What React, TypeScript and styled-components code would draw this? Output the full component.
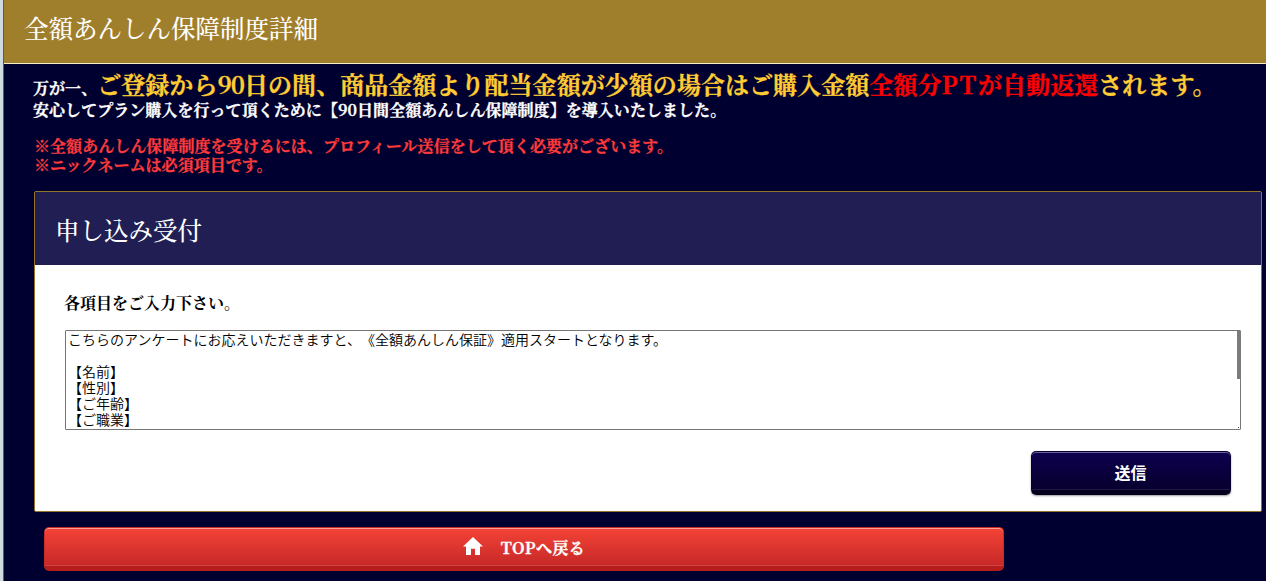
import React from 'react';
import styled, { createGlobalStyle } from 'styled-components';

const colors = {
  gold: '#a07f2c',
  darkNavy: '#000030',
  navy: '#201e52',
  yellow: '#ffcc33',
  notice: '#ff3b3b',
  red: '#ff0000',
};

const serif = `'Noto Serif CJK JP', 'Liberation Serif', 'Noto Sans CJK JP', serif`;
const sans = `'Noto Sans CJK JP', sans-serif`;

const GlobalStyle = createGlobalStyle`
  * {
    box-sizing: border-box;
  }

  body {
    margin: 0;
    background: ${colors.darkNavy};
    overflow: hidden;
  }
`;

const Page = styled.main`
  height: 581px;
  border-left: 3px solid #ced9e0;
  background: ${colors.darkNavy};
  color: #fff;
  font-family: ${serif};
  font-size: 16px;
  text-spacing-trim: space-all;
`;

const Content = styled.div`
  height: 100%;
  border-left: 1px solid #75591c;
`;

const PageTitle = styled.h1`
  height: 64px;
  margin: 0;
  padding: 0 0 0 20px;
  background: ${colors.gold};
  border-bottom: 1px solid #f6edc8;
  font-size: 24.5px;
  font-weight: 500;
  line-height: 55px;
  white-space: nowrap;
`;

const Lead = styled.div`
  height: 127px;
  padding: 6px 0 0 29px;
  font-weight: 700;
  letter-spacing: 0.05px;
  white-space: nowrap;
  -webkit-text-stroke: 0.3px currentColor;
`;

const LeadLine = styled.p<{ $height: number }>`
  height: ${({ $height }) => $height}px;
  margin: 0;
  line-height: ${({ $height }) => $height}px;
`;

const Headline = styled(LeadLine)`
  margin-bottom: 2px;
`;

const Large = styled.span<{ $color: string }>`
  color: ${({ $color }) => $color};
  font-size: 24px;
`;

const Spaced = styled.span<{ $spacing: number }>`
  letter-spacing: ${({ $spacing }) => $spacing}px;
`;

const Notice = styled.div`
  margin-top: 17px;
  padding-left: 1px;
  color: ${colors.notice};
`;

const Panel = styled.section`
  width: 1228px;
  height: 321px;
  margin-left: 30px;
  border: 1px solid #937429;
  border-radius: 2px;
  background: #fff;
`;

const PanelTitle = styled.h2`
  height: 73px;
  margin: 0;
  padding-left: 20px;
  background: ${colors.navy};
  font-size: 24.5px;
  font-weight: 500;
  line-height: 76px;
`;

const PanelBody = styled.form`
  display: flex;
  flex-direction: column;
  padding: 27px 20px 0 30px;
`;

const Label = styled.label`
  height: 22px;
  margin: 0 0 16px -1px;
  color: #000;
  font-weight: 700;
  line-height: 22px;
`;

const FieldWrap = styled.div`
  position: relative;
  height: 100px;
`;

const Field = styled.textarea`
  display: block;
  width: 100%;
  height: 100px;
  padding: 0 2px;
  border: 1px solid #767676;
  border-radius: 1px;
  outline: none;
  overflow: hidden;
  resize: none;
  color: #000;
  font: 350 14px/16px ${sans};
  text-spacing-trim: space-all;
`;

const ScrollThumb = styled.span`
  position: absolute;
  top: 1px;
  right: 0;
  width: 4px;
  height: 48px;
  background: #7b7b7b;
`;

const ResizeGrip = styled.span`
  position: absolute;
  right: 2px;
  bottom: 2px;
  width: 1px;
  height: 1px;
  background: #555;
`;

const SubmitButton = styled.button`
  align-self: flex-end;
  width: 200px;
  height: 44px;
  margin: 21px 10px 0 0;
  padding: 1px 1px 0 0;
  border: 1px solid #090030;
  border-bottom: 5px solid #05001c;
  border-radius: 5px;
  background: linear-gradient(#0d0050, #07002d);
  box-shadow: inset 0 1px 0 #69609a, inset 0 -1px 0 #211647, 0 1px 2px rgba(0, 0, 0, 0.4);
  color: #fff;
  font: 700 16px/38px ${sans};
`;

const TopLink = styled.a`
  display: flex;
  align-items: center;
  justify-content: center;
  width: 960px;
  height: 44px;
  margin: 15px 0 0 40px;
  border: 1px solid #c52a27;
  border-bottom: 5px solid #b71c1c;
  border-radius: 5px;
  background: linear-gradient(#f44336, #c62828);
  box-shadow: inset 0 1px 0 #f99d96, inset 0 -1px 0 #d04440;
  color: #fff;
  font-weight: 700;
  line-height: 38px;
  text-decoration: none;
`;

const HomeIcon = styled.svg`
  width: 20px;
  height: 18px;
  margin: 0 18px 3px 0;
  fill: #fff;
`;

const LinkText = styled.span`
  position: relative;
  top: 1px;
  letter-spacing: 0.4px;
  -webkit-text-stroke: 0.3px currentColor;
`;

const questionnaire = `こちらのアンケートにお応えいただきますと、《全額あんしん保証》適用スタートとなります。

【名前】
【性別】
【ご年齢】
【ご職業】`;

const App: React.FC = () => {
  return (
    <Page>
      <GlobalStyle />
      <Content>
        <PageTitle>全額あんしん保障制度詳細</PageTitle>

        <Lead>
          <Headline $height={28}>
            万が一、
            <Large $color={colors.yellow}>
              ご登録から<Spaced $spacing={-1}>90</Spaced>日の間、商品金額より配当金額が少額の場合はご購入金額
            </Large>
            <Large $color={colors.red}>
              全額分<Spaced $spacing={1.8}>PT</Spaced>が自動返還
            </Large>
            <Large $color={colors.yellow}>されます。</Large>
          </Headline>
          <LeadLine $height={19}>
            安心してプラン購入を行って頂くために【90日間全額あんしん保障制度】を導入いたしました。
          </LeadLine>
          <Notice>
            <LeadLine $height={19}>
              ※全額あんしん保障制度を受けるには、プロフィール送信をして頂く必要がございます。
            </LeadLine>
            <LeadLine $height={19}>※ニックネームは必須項目です。</LeadLine>
          </Notice>
        </Lead>

        <Panel>
          <PanelTitle>申し込み受付</PanelTitle>
          <PanelBody>
            <Label htmlFor="message">各項目をご入力下さい。</Label>
            <FieldWrap>
              <Field id="message" defaultValue={questionnaire} spellCheck={false} />
              <ScrollThumb />
              <ResizeGrip />
            </FieldWrap>
            <SubmitButton type="button">送信</SubmitButton>
          </PanelBody>
        </Panel>

        <TopLink href="#">
          <HomeIcon viewBox="2 3 20 17" preserveAspectRatio="none">
            <path d="M10 20v-6h4v6h5v-8h3L12 3 2 12h3v8z" />
          </HomeIcon>
          <LinkText>TOPへ戻る</LinkText>
        </TopLink>
      </Content>
    </Page>
  );
};

export default App;
